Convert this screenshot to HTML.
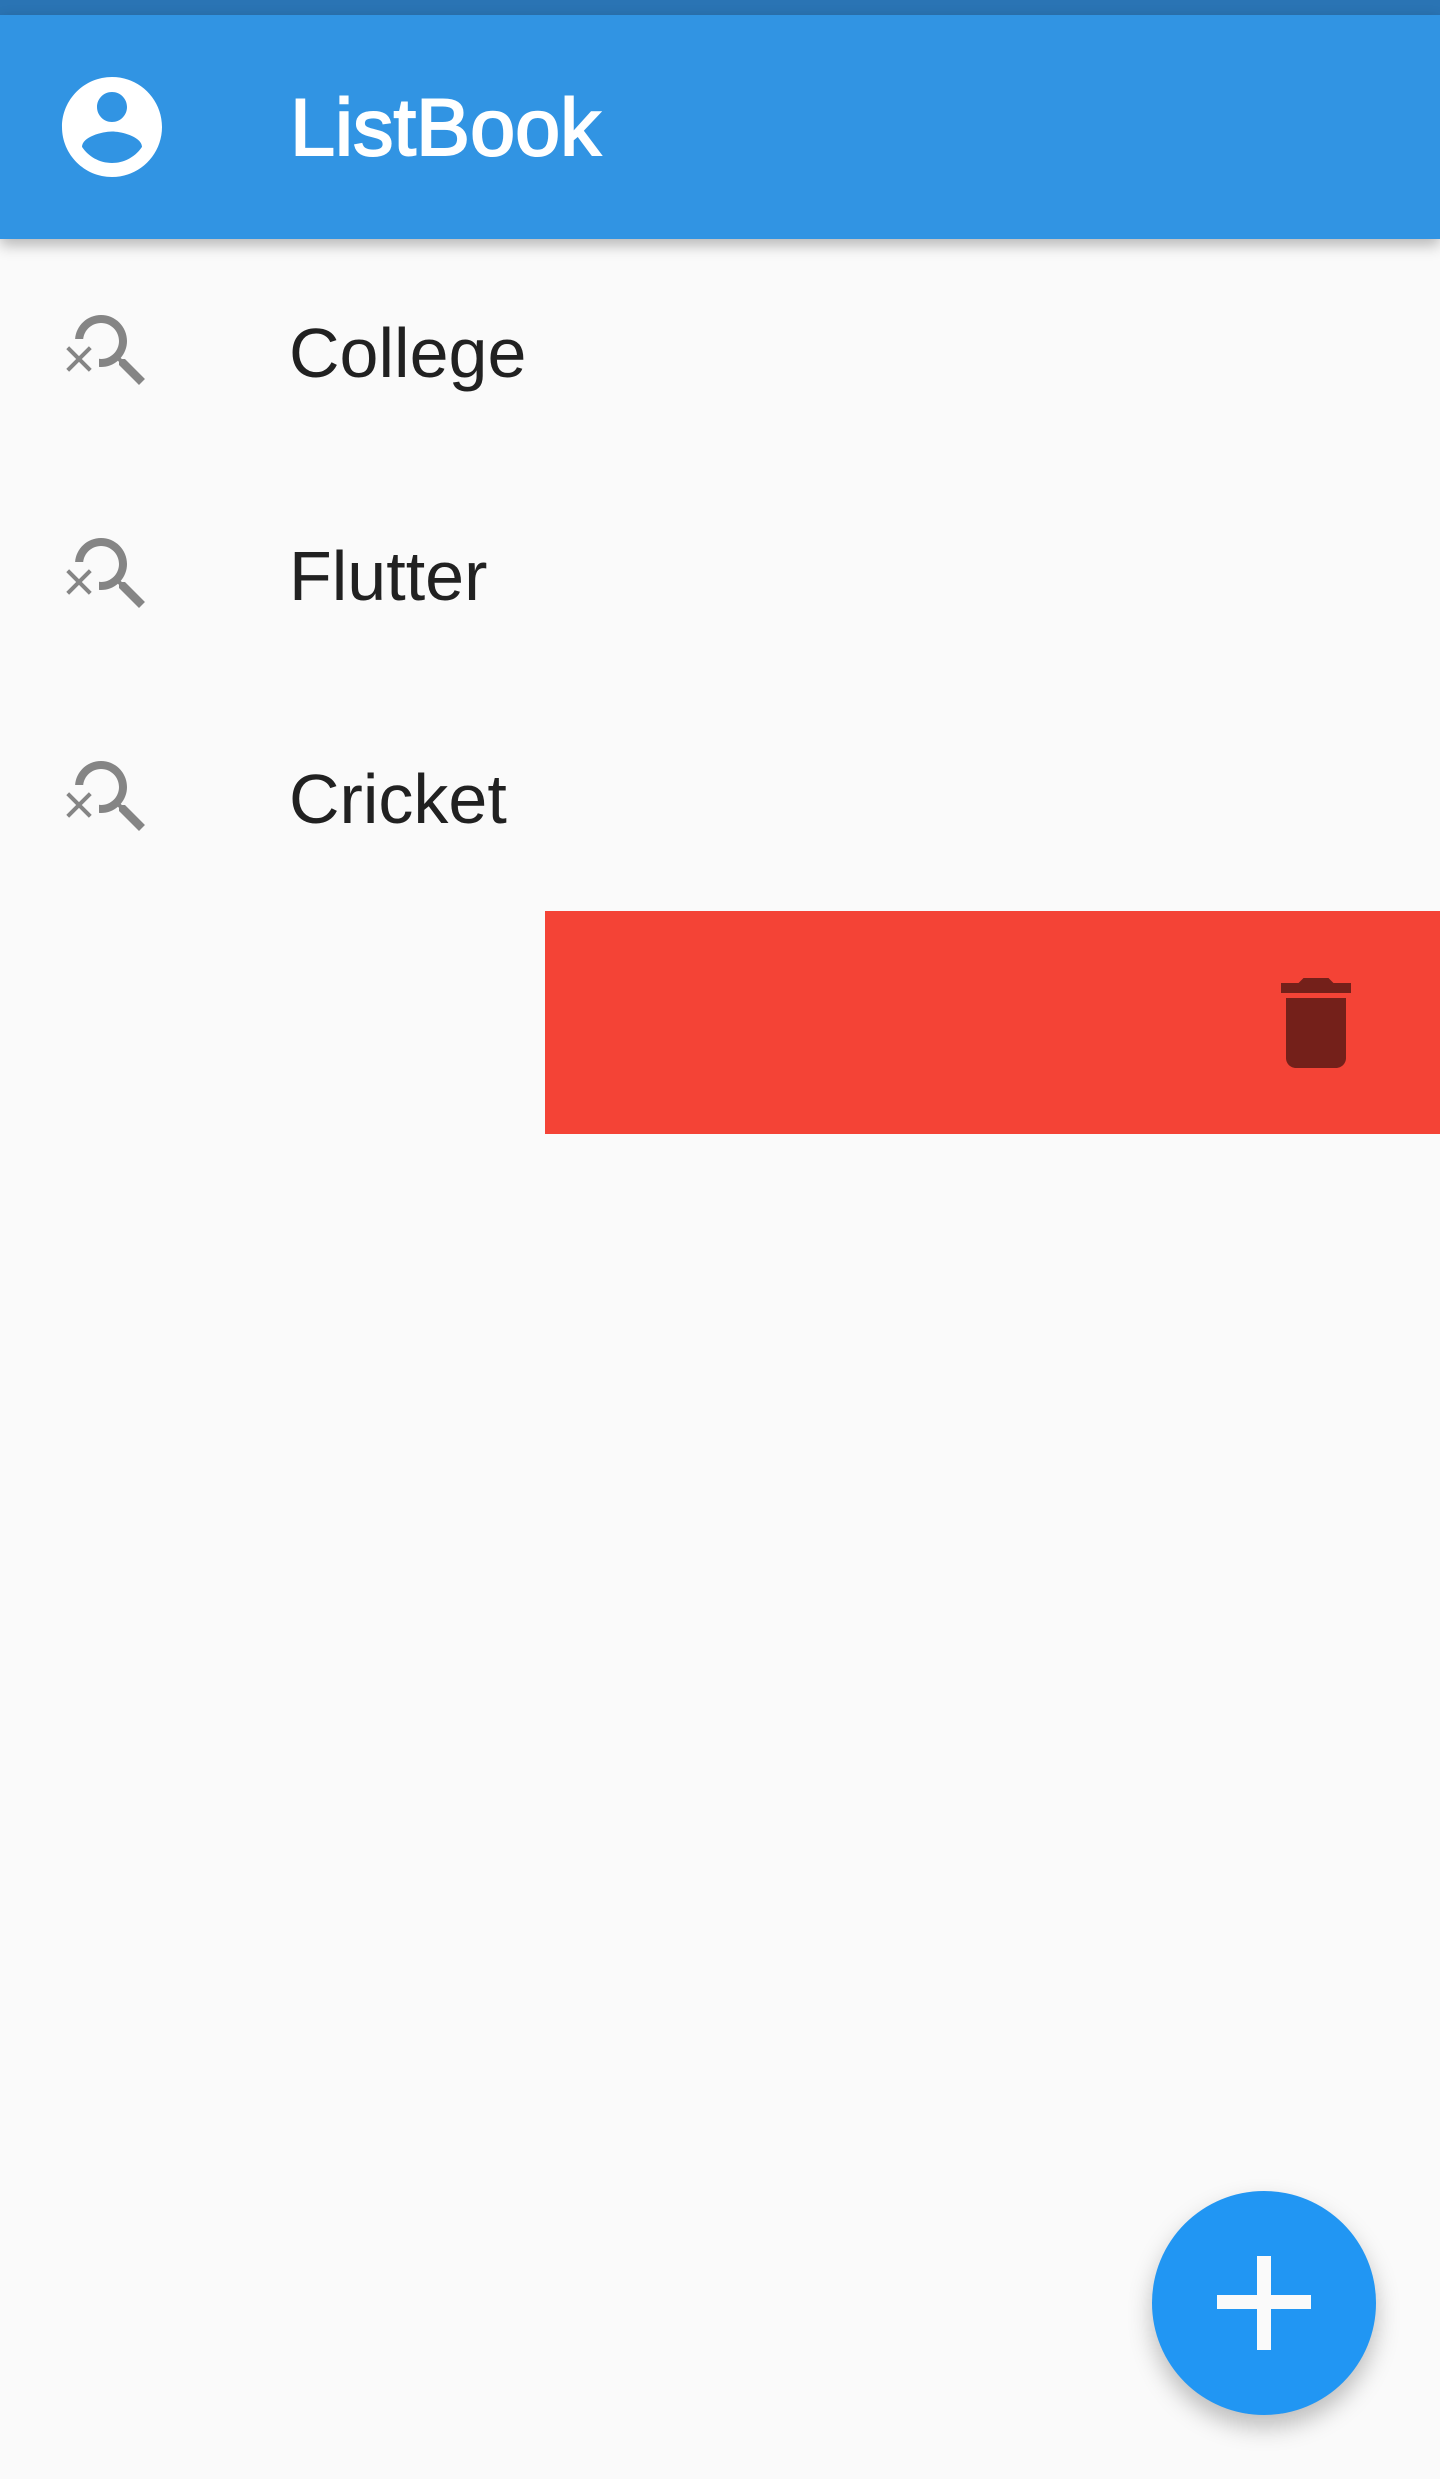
<!DOCTYPE html>
<html><head><meta charset="utf-8"><style>
html,body{margin:0;padding:0}
body{width:1440px;height:2479px;background:#fafafa;position:relative;overflow:hidden;font-family:"Liberation Sans",sans-serif}
.abs{position:absolute}
.status{left:0;top:0;width:1440px;height:15px;background:#2a74b4}
.bar{left:0;top:15px;width:1440px;height:224px;background:#3194e3;box-shadow:0 6px 14px rgba(0,0,0,.28)}
.title{left:290px;top:88px;font-size:81px;line-height:81px;color:#fff;-webkit-text-stroke:2px #fff;white-space:nowrap}
.item{left:289px;font-size:70px;line-height:70px;color:#212121;white-space:nowrap}
.red{left:545px;top:911px;width:895px;height:223px;background:#f44336}
.fab{left:1152px;top:2191px;width:224px;height:224px;border-radius:50%;background:#2196f3;box-shadow:0 12px 24px rgba(0,0,0,.25)}
</style></head><body>
<div class="abs status"></div>
<div class="abs bar"></div>
<svg class="abs" style="left:52px;top:67px" width="120" height="120" viewBox="0 0 24 24"><path fill="#fff" d="M12 2C6.48 2 2 6.48 2 12s4.48 10 10 10 10-4.48 10-10S17.52 2 12 2zm0 3c1.66 0 3 1.34 3 3s-1.34 3-3 3-3-1.34-3-3 1.34-3 3-3zm0 14.2c-2.5 0-4.710-1.28-6-3.22.03-1.99 4-3.08 6-3.08 1.99 0 5.97 1.09 6 3.08-1.29 1.940-3.5 3.220-6 3.22z"/></svg>
<div class="abs title">ListBook</div>

<svg class="abs" style="left:63px;top:303px" width="96" height="96" viewBox="0 0 24 24"><path fill="#858585" d="M15.5 14h-.79l-.28-.27C15.41 12.59 16 11.11 16 9.5 16 5.91 13.09 3 9.5 3 6.08 3 3.28 5.64 3.03 9h2.02C5.3 6.75 7.18 5 9.5 5 11.99 5 14 7.01 14 9.5S11.99 14 9.5 14c-.17 0-.33-.03-.5-.05v2.020c.17.02.33.03.5.03 1.61 0 3.09-.59 4.23-1.57l.27.28v.79l5 4.99L20.49 19l-4.99-5zM6.47 10.82L4 13.29l-2.47-2.47-.71.71L3.29 14 .82 16.47l.71.71L4 14.71l2.47 2.47.71-.71L4.710 14l2.47-2.47z"/></svg>
<div class="abs item" style="top:318px">College</div>

<svg class="abs" style="left:63px;top:526px" width="96" height="96" viewBox="0 0 24 24"><path fill="#858585" d="M15.5 14h-.79l-.28-.27C15.41 12.59 16 11.11 16 9.5 16 5.91 13.09 3 9.5 3 6.08 3 3.28 5.64 3.03 9h2.02C5.3 6.75 7.18 5 9.5 5 11.99 5 14 7.01 14 9.5S11.99 14 9.5 14c-.17 0-.33-.03-.5-.05v2.020c.17.02.33.03.5.03 1.61 0 3.09-.59 4.23-1.57l.27.28v.79l5 4.99L20.49 19l-4.99-5zM6.47 10.82L4 13.29l-2.47-2.47-.71.71L3.29 14 .82 16.47l.71.71L4 14.71l2.47 2.47.71-.71L4.710 14l2.47-2.47z"/></svg>
<div class="abs item" style="top:541px">Flutter</div>

<svg class="abs" style="left:63px;top:749px" width="96" height="96" viewBox="0 0 24 24"><path fill="#858585" d="M15.5 14h-.79l-.28-.27C15.41 12.59 16 11.11 16 9.5 16 5.91 13.09 3 9.5 3 6.08 3 3.28 5.64 3.03 9h2.02C5.3 6.75 7.18 5 9.5 5 11.99 5 14 7.01 14 9.5S11.99 14 9.5 14c-.17 0-.33-.03-.5-.05v2.020c.17.02.33.03.5.03 1.61 0 3.09-.59 4.23-1.57l.27.28v.79l5 4.99L20.49 19l-4.99-5zM6.47 10.82L4 13.29l-2.47-2.47-.71.71L3.29 14 .82 16.47l.71.71L4 14.71l2.47 2.47.71-.71L4.710 14l2.47-2.47z"/></svg>
<div class="abs item" style="top:764px">Cricket</div>

<div class="abs red"></div>
<svg class="abs" style="left:1256px;top:963px" width="120" height="120" viewBox="0 0 24 24"><path fill="#74201a" d="M6 19c0 1.1.9 2 2 2h8c1.1 0 2-.9 2-2V7H6v12zM19 4h-3.5l-1-1h-5l-1 1H5v2h14V4z"/></svg>

<div class="abs fab"></div>
<div class="abs" style="left:1217px;top:2295px;width:94px;height:14px;background:#fafafa"></div>
<div class="abs" style="left:1257px;top:2256px;width:14px;height:94px;background:#fafafa"></div>
</body></html>
